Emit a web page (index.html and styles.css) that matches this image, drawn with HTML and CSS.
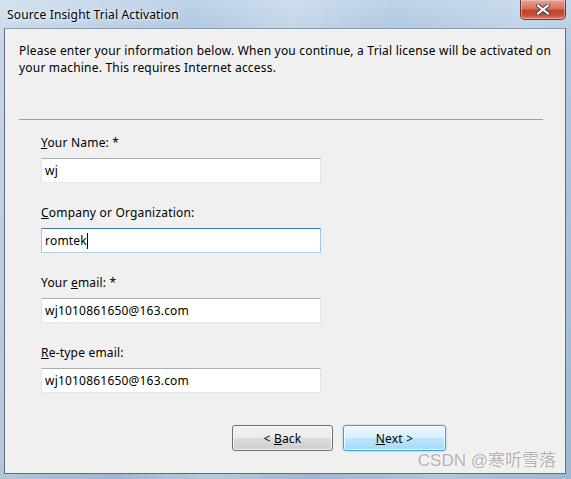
FILE: index.html
```html
<!DOCTYPE html>
<html>
<head>
<meta charset="utf-8">
<link rel="stylesheet" href="styles.css">
</head>
<body>
<div class="window">
  <div class="titlebar">
    <span class="title">Source Insight Trial Activation</span>
    <div class="close">
      <svg width="14" height="11" viewBox="0 0 14 11">
        <path d="M2 1.5 L12 9.5 M12 1.5 L2 9.5" stroke="#3b4456" stroke-width="4" stroke-linecap="square"/>
        <path d="M2 1.5 L12 9.5 M12 1.5 L2 9.5" stroke="#ffffff" stroke-width="2" stroke-linecap="square"/>
      </svg>
    </div>
  </div>
  <div class="client">
    <p class="intro">Please enter your information below. When you continue, a Trial license will be activated on<br>your machine. This requires Internet access.</p>
    <div class="sep"></div>
    <div class="form">
      <div class="group">
        <div class="label"><u>Y</u>our Name: *</div>
        <div class="input">wj</div>
      </div>
      <div class="group">
        <div class="label"><u>C</u>ompany or Organization:</div>
        <div class="input focus">romtek<span class="caret"></span></div>
      </div>
      <div class="group">
        <div class="label">Your <u>e</u>mail: *</div>
        <div class="input">wj1010861650@163.com</div>
      </div>
      <div class="group">
        <div class="label"><u>R</u>e-type email:</div>
        <div class="input">wj1010861650@163.com</div>
      </div>
    </div>
    <div class="buttons">
      <div class="btn"><span>&lt;&nbsp;<u>B</u>ack</span></div>
      <div class="btn default"><span><u>N</u>ext&nbsp;&gt;</span></div>
    </div>
    <div class="watermark">CSDN @寒听雪落</div>
  </div>
</div>
</body>
</html>
```
FILE: styles.css
```css
html, body {
  margin: 0;
  padding: 0;
}
body {
  width: 571px;
  height: 479px;
  overflow: hidden;
  font-family: "Noto Sans", "Liberation Sans", sans-serif;
  font-size: 12px;
  letter-spacing: 0.2px;
  color: #000;
}
.window {
  width: 571px;
  height: 479px;
  box-sizing: border-box;
  padding: 0 5px 5px 4px;
  background:
    linear-gradient(100deg, rgba(255,255,255,0.35) 0%, rgba(255,255,255,0) 30%, rgba(255,255,255,0.25) 45%, rgba(255,255,255,0) 60%, rgba(255,255,255,0.2) 80%, rgba(255,255,255,0) 100%),
    linear-gradient(180deg, #bed3e9 0%, #a9c1da 10%, #9fb7d1 100%);
  display: flex;
  flex-direction: column;
}
.titlebar {
  height: 28px;
  display: flex;
  align-items: flex-start;
  justify-content: space-between;
}
.title {
  margin: 7px 0 0 3px;
  font-size: 12px;
  line-height: 16px;
  letter-spacing: 0.15px;
  color: #000;
  text-shadow: 0 0 6px rgba(255,255,255,0.9), 0 0 3px rgba(255,255,255,0.8);
}
.close {
  width: 46px;
  height: 20px;
  box-sizing: border-box;
  border: 1px solid #6b3a36;
  border-top: none;
  border-radius: 0 0 5px 5px;
  background: linear-gradient(180deg, #e8a293 0%, #d8705c 45%, #c2432a 55%, #c94f34 80%, #e0836a 100%);
  box-shadow: inset 0 0 0 1px rgba(255,220,210,0.45);
  display: flex;
  align-items: center;
  justify-content: center;
}
.client {
  position: relative;
  flex: 1;
  background: #f0f0f0;
  border: 1px solid #5e6e80;
  border-top-color: #8b9bb0;
  display: flex;
  flex-direction: column;
}
.intro {
  margin: 13px 0 0 14px;
  line-height: 17px;
  white-space: nowrap;
}
.sep {
  margin: 43px 0 0 14px;
  width: 524px;
  height: 1px;
  background: #a0a0a0;
}
.form {
  margin: 15px 0 0 36px;
  display: flex;
  flex-direction: column;
  gap: 22px;
}
.group {
  display: flex;
  flex-direction: column;
  gap: 7px;
}
.label {
  line-height: 16px;
}
.input {
  width: 280px;
  height: 25px;
  box-sizing: border-box;
  background: #fff;
  border: 1px solid #e2e3ea;
  border-top-color: #abadb3;
  border-bottom-color: #e3e9ef;
  padding: 0 3px;
  line-height: 23px;
  display: flex;
  align-items: center;
}
.input.focus {
  border-color: #a4c9e3;
  border-top-color: #3d7bad;
  border-bottom-color: #b5cfe7;
}
.caret {
  display: inline-block;
  width: 1px;
  height: 16px;
  background: #000;
}
.buttons {
  margin: 32px 0 0 227px;
  display: flex;
  gap: 10px;
}
.btn {
  width: 101px;
  height: 26px;
  box-sizing: border-box;
  border: 1px solid #707070;
  border-radius: 3px;
  background: linear-gradient(180deg, #f2f2f2 0%, #ebebeb 50%, #dddddd 51%, #cfcfcf 100%);
  box-shadow: inset 0 0 0 1px rgba(255,255,255,0.7);
  display: flex;
  align-items: center;
  justify-content: center;
}
.btn.default {
  width: 103px;
  border-color: #3c9fe0;
  background: linear-gradient(180deg, #eaf6fd 0%, #d9f0fc 50%, #bee6fd 51%, #a7d9f5 100%);
  box-shadow: inset 0 0 0 1px rgba(255,255,255,0.8), 0 0 2px rgba(60,170,240,0.6);
}
.watermark {
  position: absolute;
  right: 9px;
  bottom: 2px;
  font-family: "Liberation Sans", "Noto Sans CJK SC", sans-serif;
  font-size: 17px;
  letter-spacing: 0;
  line-height: 20px;
  color: rgba(160,160,160,0.8);
  text-shadow: 0 0 2px #fff;
  white-space: nowrap;
}
```
